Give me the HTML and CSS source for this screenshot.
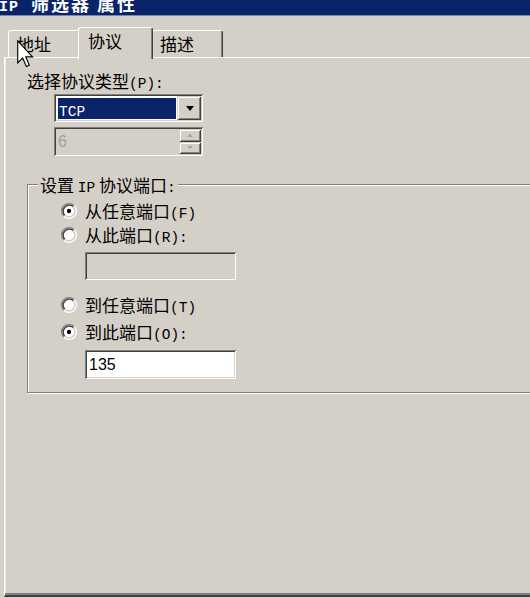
FILE: index.html
```html
<!DOCTYPE html>
<html lang="zh-CN">
<head>
<meta charset="utf-8">
<title>IP 筛选器 属性</title>
<link rel="stylesheet" href="styles.css">
</head>
<body>
<div class="window">
  <div class="titlebar"><span class="title-text"><span class="lat">IP</span><span class="gap"></span>筛选器<span class="gap-sm"></span>属性</span></div>
  <div class="dialog">
    <div class="tabs">
      <div class="tab tab-first">地址</div>
      <div class="tab tab-active">协议</div>
      <div class="tab tab-last">描述</div>
    </div>
    <div class="panel">
      <div class="label">选择协议类型<span class="lat">(P):</span></div>
      <div class="sunken combo">
        <div class="combo-in">
          <div class="combo-value"><span class="lat">TCP</span></div>
          <div class="raised combo-btn"><span class="tri-down"></span></div>
        </div>
      </div>
      <div class="sunken spin">
        <div class="spin-value">6</div>
        <div class="spin-btns">
          <div class="raised spin-btn"><span class="tri-up-sm"></span></div>
          <div class="raised spin-btn"><span class="tri-down-sm"></span></div>
        </div>
      </div>
      <div class="group">
        <div class="legend">设置 <span class="lat">IP</span> 协议端口<span class="lat">:</span></div>
        <div class="radio r1">
          <svg class="radio-ico" width="16" height="16" viewBox="0 0 12 12"><circle cx="6" cy="6" r="4.2" fill="#fff"/><path d="M2.11 9.89 A5.5 5.5 0 0 1 9.89 2.11" fill="none" stroke="#808080"/><path d="M9.89 2.11 A5.5 5.5 0 0 1 2.11 9.89" fill="none" stroke="#fff"/><path d="M2.82 9.18 A4.5 4.5 0 0 1 9.18 2.82" fill="none" stroke="#404040"/><path d="M9.18 2.82 A4.5 4.5 0 0 1 2.82 9.18" fill="none" stroke="#d4d0c8"/><circle cx="6" cy="6" r="1.6" fill="#000"/></svg>
          <span>从任意端口<span class="lat">(F)</span></span>
        </div>
        <div class="radio r2">
          <svg class="radio-ico" width="16" height="16" viewBox="0 0 12 12"><circle cx="6" cy="6" r="4.2" fill="#fff"/><path d="M2.11 9.89 A5.5 5.5 0 0 1 9.89 2.11" fill="none" stroke="#808080"/><path d="M9.89 2.11 A5.5 5.5 0 0 1 2.11 9.89" fill="none" stroke="#fff"/><path d="M2.82 9.18 A4.5 4.5 0 0 1 9.18 2.82" fill="none" stroke="#404040"/><path d="M9.18 2.82 A4.5 4.5 0 0 1 2.82 9.18" fill="none" stroke="#d4d0c8"/></svg>
          <span>从此端口<span class="lat">(R):</span></span>
        </div>
        <div class="sunken field field-disabled"></div>
        <div class="radio r3">
          <svg class="radio-ico" width="16" height="16" viewBox="0 0 12 12"><circle cx="6" cy="6" r="4.2" fill="#fff"/><path d="M2.11 9.89 A5.5 5.5 0 0 1 9.89 2.11" fill="none" stroke="#808080"/><path d="M9.89 2.11 A5.5 5.5 0 0 1 2.11 9.89" fill="none" stroke="#fff"/><path d="M2.82 9.18 A4.5 4.5 0 0 1 9.18 2.82" fill="none" stroke="#404040"/><path d="M9.18 2.82 A4.5 4.5 0 0 1 2.82 9.18" fill="none" stroke="#d4d0c8"/></svg>
          <span>到任意端口<span class="lat">(T)</span></span>
        </div>
        <div class="radio r4">
          <svg class="radio-ico" width="16" height="16" viewBox="0 0 12 12"><circle cx="6" cy="6" r="4.2" fill="#fff"/><path d="M2.11 9.89 A5.5 5.5 0 0 1 9.89 2.11" fill="none" stroke="#808080"/><path d="M9.89 2.11 A5.5 5.5 0 0 1 2.11 9.89" fill="none" stroke="#fff"/><path d="M2.82 9.18 A4.5 4.5 0 0 1 9.18 2.82" fill="none" stroke="#404040"/><path d="M9.18 2.82 A4.5 4.5 0 0 1 2.82 9.18" fill="none" stroke="#d4d0c8"/><circle cx="6" cy="6" r="1.6" fill="#000"/></svg>
          <span>到此端口<span class="lat">(O):</span></span>
        </div>
        <div class="sunken field field-white">135</div>
      </div>
    </div>
  </div>
  <svg class="cursor" width="17" height="28" viewBox="0 0 12 19.5"><path d="M0.5 0.5 L0.5 16 L4 12.6 L6.6 18.6 L8.7 17.7 L6.2 11.8 L11 11.8 Z" fill="#fff" stroke="#000" stroke-width="0.8" stroke-linejoin="miter"/></svg>
</div>
</body>
</html>
```

FILE: styles.css
```css
* { box-sizing: border-box; }
html, body { margin: 0; padding: 0; }
body {
  width: 530px;
  height: 597px;
  overflow: hidden;
  background: #d4d0c8;
  font-family: "Noto Sans CJK SC", sans-serif;
  font-size: 17px;
  color: #000;
}
.window {
  position: relative;
  width: 530px;
  height: 597px;
  overflow: hidden;
}
.titlebar {
  height: 16px;
  background: #0a246a;
  border-bottom: 1px solid #7d88a8;
  overflow: hidden;
}
.title-text {
  display: flex;
  align-items: baseline;
  height: 19px;
  margin-top: -6px;
  margin-left: -1px;
  font-size: 18px;
  line-height: 19px;
  font-weight: bold;
  letter-spacing: 2px;
  color: #fff;
  white-space: nowrap;
}
.title-text .lat { font-weight: bold; font-size: 15px; letter-spacing: 1px; }
.gap { display: inline-block; width: 12px; }
.gap-sm { display: inline-block; width: 6px; }
.lat {
  font-family: "Liberation Mono", monospace;
  font-size: 14.5px;
  line-height: 1;
}
.dialog { padding-left: 4px; }
.tabs {
  display: flex;
  align-items: flex-end;
  height: 43px;
  margin-bottom: -2px;
  padding-left: 4px;
}
.tab {
  height: 27px;
  margin-bottom: 2px;
  background: #d4d0c8;
  border-top: 1px solid #fff;
  border-left: 1px solid #fff;
  border-right: 1px solid #404040;
  box-shadow: inset -1px 0 #808080;
  border-radius: 3px 3px 0 0;
  padding-top: 3px;
  line-height: 20px;
  white-space: nowrap;
}
.tab-first { width: 72px; padding-left: 8px; }
.tab-active {
  position: relative;
  z-index: 1;
  width: 75px;
  height: 32px;
  margin: 0 -1px 0 -2px;
  padding-left: 9px;
}
.tab-last { width: 71px; padding-left: 7px; }
.panel {
  width: 600px;
  height: 540px;
  border-top: 1px solid #fff;
  border-left: 1px solid #fff;
  border-bottom: 2px solid #404040;
  box-shadow: inset 0 -2px #808080, inset 1px 0 #ecebe6;
  padding: 13px 0 0 22px;
}
.label { height: 20px; line-height: 20px; white-space: nowrap; }
.sunken {
  box-shadow: inset 1px 1px #808080, inset -1px -1px #fff, inset 2px 2px #404040, inset -2px -2px #d4d0c8;
  padding: 2px;
}
.raised {
  background: #d4d0c8;
  box-shadow: inset 1px 1px #d4d0c8, inset -1px -1px #404040, inset 2px 2px #fff, inset -2px -2px #808080;
}
.combo {
  margin: 3px 0 0 27px;
  width: 149px;
  height: 28px;
  background: #fff;
}
.combo-in {
  display: flex;
  height: 100%;
  background: #fff;
}
.combo-value {
  flex: 1;
  margin: 2px 1px 1px 2px;
  background: #0a246a;
  color: #fff;
  line-height: 21px;
  padding-left: 1px;
}
.combo-btn {
  width: 24px;
  display: flex;
  align-items: center;
  justify-content: center;
}
.tri-down {
  width: 0;
  height: 0;
  border-left: 4.5px solid transparent;
  border-right: 4.5px solid transparent;
  border-top: 5px solid #000;
  margin-left: 1px;
}
.spin {
  margin: 5px 0 0 27px;
  width: 149px;
  height: 29px;
  display: flex;
  background: #d4d0c8;
}
.spin-value {
  flex: 1;
  padding-left: 2px;
  font-family: "Liberation Sans", sans-serif;
  font-size: 16px;
  line-height: 25px;
  color: #a0a0a0;
}
.spin-btns {
  width: 22px;
  display: flex;
  flex-direction: column;
}
.spin-btn {
  flex: 1;
  display: flex;
  align-items: center;
  justify-content: center;
}
.tri-up-sm {
  width: 0; height: 0;
  border-left: 3px solid transparent;
  border-right: 3px solid transparent;
  border-bottom: 3px solid #a0a0a0;
}
.tri-down-sm {
  width: 0; height: 0;
  border-left: 3px solid transparent;
  border-right: 3px solid transparent;
  border-top: 3px solid #a0a0a0;
}
.group {
  margin-top: 28px;
  width: 540px;
  border: 1px solid #808080;
  box-shadow: inset 1px 1px #fff, 1px 1px #fff;
  padding-bottom: 13px;
}
.legend {
  width: max-content;
  height: 20px;
  margin: -10px 0 0 10px;
  padding: 0 2px;
  background: #d4d0c8;
  line-height: 20px;
  white-space: nowrap;
}
.radio {
  display: flex;
  align-items: center;
  height: 20px;
  padding-left: 33px;
  line-height: 20px;
  white-space: nowrap;
}
.radio-ico { margin-right: 8px; flex: none; }
.r1 { margin-top: 6px; }
.r2 { margin-top: 4px; }
.r3 { margin-top: 15px; }
.r4 { margin-top: 7px; }
.field {
  margin-left: 57px;
  width: 151px;
  padding: 2px 4px;
  font-family: "Liberation Sans", sans-serif;
  font-size: 16px;
  line-height: 25px;
}
.field-disabled {
  margin-top: 7px;
  height: 28px;
  background: #d4d0c8;
}
.field-white {
  margin-top: 8px;
  height: 29px;
  background: #fff;
}
.cursor {
  position: absolute;
  left: 17px;
  top: 40px;
}
```
